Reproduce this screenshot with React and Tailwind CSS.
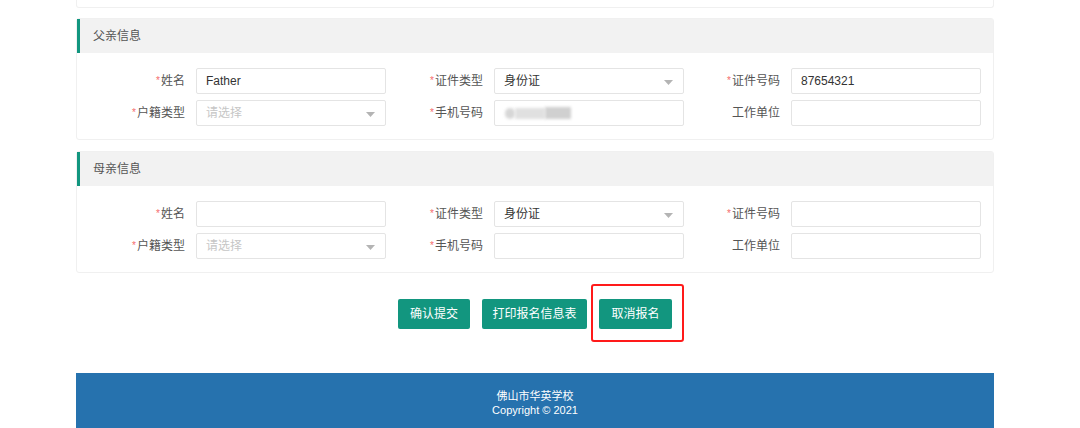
import React from 'react';

const font = { fontFamily: '"Liberation Sans", "Noto Sans CJK SC", sans-serif' };

const Arrow = () => (
  <svg width="9" height="5" viewBox="0 0 9 5" className="absolute right-[10px] top-[11px]">
    <path d="M0 0 L9 0 L4.5 5 Z" fill="#b4b4b4" />
  </svg>
);

const Label = ({ text, required, className = '' }) => (
  <div className={`flex items-center justify-end pr-[11px] text-[12px] text-[#555] ${className}`}>
    {required && <span className="text-[#f56c6c] mr-[1px] text-[10px] relative -top-[1px]">*</span>}
    {text}
  </div>
);

const Input = ({ value, placeholder, select, blur }) => (
  <div className="relative h-[26px] w-[190px] border border-[#e4e4e4] rounded-[2px] bg-white flex items-center px-[9px] text-[12px] text-[#333]">
    {value ? <span>{value}</span> : placeholder ? <span className="text-[#c6c6c6]">{placeholder}</span> : null}
    {blur && (
      <div className="flex items-center gap-0">
        <div className="h-[11px] w-[10px] rounded-full bg-[#d6d6d6] blur-[1.5px] ml-[1px]" />
        <div className="h-[11px] w-[30px] bg-[#e0e0e0] blur-[1.5px]" />
        <div className="h-[12px] w-[26px] bg-[#d0d0d0] blur-[1.5px]" />
      </div>
    )}
    {select && <Arrow />}
  </div>
);

const Section = ({ title, father }) => (
  <div className="border border-[#f0f0f0] rounded-[3px] bg-white">
    <div className="h-[34px] bg-[#f2f2f2] border-l-[3px] border-[#12967f] flex items-center pl-[13px] text-[12px] text-[#555]">
      {title}
    </div>
    <div className="pt-[15px] pb-[13px] grid grid-cols-[119px_190px_108px_190px_107px_190px] gap-y-[6px]">
      <Label text="姓名" required />
      <Input value={father ? 'Father' : ''} />
      <Label text="证件类型" required />
      <Input value="身份证" select />
      <Label text="证件号码" required />
      <Input value={father ? '87654321' : ''} />

      <Label text="户籍类型" required />
      <Input placeholder="请选择" select />
      <Label text="手机号码" required />
      <Input blur={father} />
      <Label text="工作单位" />
      <Input />
    </div>
  </div>
);

const Button = ({ children, w }) => (
  <button className={`h-[30px] ${w} bg-[#12967f] text-white text-[12px] rounded-[2px]`}>{children}</button>
);

export default function App() {
  return (
    <div className="w-[1080px] h-[428px] bg-white overflow-hidden" style={font}>
      <div className="ml-[76px] w-[918px]">
        <div className="h-[8px] border border-t-0 border-[#f0f0f0] rounded-b-[3px]" />
        <div className="mt-[10px]">
          <Section title="父亲信息" father />
        </div>
        <div className="mt-[11px]">
          <Section title="母亲信息" />
        </div>
        <div className="mt-[26px] flex justify-center gap-[12px]">
          <Button w="w-[72px]">确认提交</Button>
          <Button w="w-[105px]">打印报名信息表</Button>
          <div className="relative">
            <Button w="w-[73px]">取消报名</Button>
            <div className="absolute -left-[8px] -top-[15px] w-[93px] h-[58px] border-2 border-[#ff1a1a] rounded-[3px]" />
          </div>
        </div>
        <div className="mt-[44px] h-[60px] bg-[#2672ae] flex flex-col items-center pt-[16px] text-white text-[11px] leading-[14px]">
          <div>佛山市华英学校</div>
          <div>Copyright © 2021</div>
        </div>
      </div>
    </div>
  );
}
